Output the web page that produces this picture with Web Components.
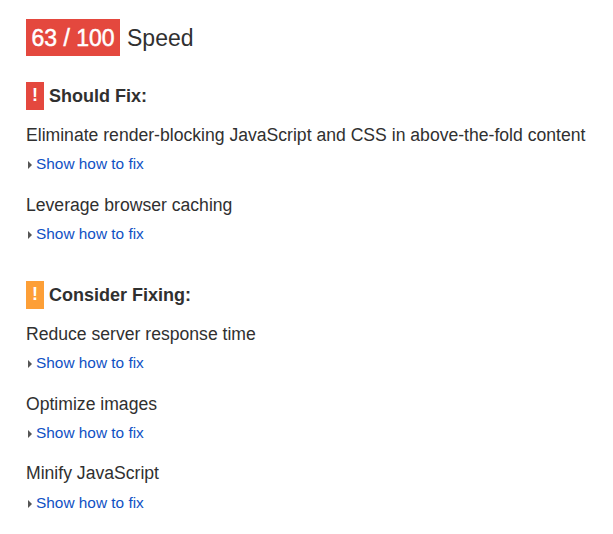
<!DOCTYPE html>
<html lang="en"><head><meta charset="utf-8"><title>Speed</title>
<style>
html,body{margin:0;background:#fff}
body{font-family:"Liberation Sans",Arial,sans-serif;color:#303030}
</style></head><body>
<speed-report>
<score-heading score="63 / 100">Speed</score-heading>
<rule-group label="Should Fix:" style="--badge:#e4483e">
<rule-item>Eliminate render-blocking JavaScript and CSS in above-the-fold content</rule-item>
<rule-item>Leverage browser caching</rule-item>
</rule-group>
<rule-group label="Consider Fixing:" style="--badge:#fd9f37">
<rule-item>Reduce server response time</rule-item>
<rule-item>Optimize images</rule-item>
<rule-item style="--lead:-1px;--gap:9px">Minify JavaScript</rule-item>
</rule-group>
</speed-report>
<script>
const define=(name,markup,setup)=>customElements.define(name,class extends HTMLElement{
 constructor(){super();this.attachShadow({mode:'open'}).innerHTML=markup;}
 connectedCallback(){if(setup)setup(this,this.shadowRoot);}
});
define('speed-report',`<style>:host{display:flex;flex-direction:column;align-items:flex-start;box-sizing:border-box;width:613px;height:534px;padding:19px 0 0 26px;gap:26px;overflow:hidden}</style><slot></slot>`);
define('score-heading',`<style>:host{display:flex;align-items:center;gap:7px;height:37px;font-size:23px;line-height:37px;white-space:nowrap}
b,span{box-sizing:border-box;height:37px;padding-top:1px}
b{width:94px;text-align:center;background:#e4483e;color:#fff;font-weight:400;-webkit-text-stroke:.5px #fff}</style><b></b><span><slot></slot></span>`,(e,r)=>r.querySelector('b').textContent=e.getAttribute('score'));
define('rule-group',`<style>:host{display:block;margin-bottom:9px}
header{display:flex;align-items:center;gap:5px;height:28px;font-weight:700;font-size:18px;line-height:28px;white-space:nowrap;margin-bottom:14px}
i{font-style:normal;width:18px;height:28px;line-height:27px;text-align:center;color:#fff;background:var(--badge)}
section{display:flex;flex-direction:column;gap:18px}</style><header><i>!</i><span></span></header><section><slot></slot></section>`,(e,r)=>r.querySelector('span').textContent=e.getAttribute('label'));
define('rule-item',`<style>:host{display:block;height:52px;margin-top:var(--lead,0);white-space:nowrap;font-size:17.6px;line-height:22px}
a{display:flex;align-items:center;gap:4px;margin-top:var(--gap,8px);height:20px;font-size:15.4px;line-height:20px;color:#1051c4}
svg{width:4px;height:8px;margin:2px 0 0 2px}</style><div><slot></slot></div><a><svg viewBox="0 0 4 8"><path d="M0 0L4 4L0 8Z" fill="#555"/></svg><span>Show how to fix</span></a>`);
</script></body></html>
